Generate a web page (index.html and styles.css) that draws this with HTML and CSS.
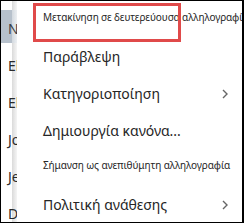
FILE: index.html
```html
<!DOCTYPE html>
<html lang="el">
<head>
    <meta charset="UTF-8">
    <title>Μενού αλληλογραφίας</title>
    <link rel="stylesheet" href="styles.css">
</head>
<body>
    <div class="frame">
        <div class="list">
            <div class="list-row selected">Nikos Papadopoulos</div>
            <div class="list-row">Eleni Georgiou</div>
            <div class="list-row">Elena Markou</div>
            <div class="list-row">John Smith</div>
            <div class="list-row">Jenny Adams</div>
            <div class="list-row">Dimitris Kostas</div>
        </div>
        <div class="menu">
            <div class="item small first">Μετακίνηση σε δευτερεύουσα αλληλογραφία</div>
            <div class="item">Παράβλεψη</div>
            <div class="item">Κατηγοριοποίηση
                <svg class="chevron" width="6" height="10" viewBox="0 0 6 10"><polyline points="1,1 5,5 1,9" fill="none" stroke="#666" stroke-width="1.4"/></svg>
            </div>
            <div class="item">Δημιουργία κανόνα...</div>
            <div class="item small">Σήμανση ως ανεπιθύμητη αλληλογραφία</div>
            <div class="item">Πολιτική ανάθεσης
                <svg class="chevron" width="6" height="10" viewBox="0 0 6 10"><polyline points="1,1 5,5 1,9" fill="none" stroke="#666" stroke-width="1.4"/></svg>
            </div>
            <!-- highlight around the first command -->
            <div class="callout"></div>
        </div>
    </div>
</body>
</html>
```

FILE: styles.css
```css
body {
    margin: 0;
    padding: 0;
    background: #fff;
    font-family: "Noto Sans", "DejaVu Sans", sans-serif;
}

.frame {
    width: 244px;
    height: 223px;
    box-sizing: border-box;
    border: 1px solid #000;
    border-right-width: 2px;
    display: flex;
    overflow: hidden;
}

.list {
    flex: none;
    width: 16px;
    padding-top: 9px;
    overflow: hidden;
    background: linear-gradient(to right, #fff 11px, #dadada 11px, #f5f5f5 16px);
}

.list-row {
    height: 37px;
    padding-left: 7px;
    display: flex;
    align-items: center;
    white-space: nowrap;
    font-size: 14px;
    color: #2a2a2a;
}

.list-row.selected {
    background: linear-gradient(to right, #b7c1cc 11px, #d3d9df 11px, #eceff2 16px) top left / 100% 33px no-repeat;
    color: #3a3f45;
}

.menu {
    flex: 1;
    min-width: 0;
    position: relative;
    background: #fff;
}

.item {
    height: 37px;
    box-sizing: border-box;
    padding: 0 14px 0 26px;
    display: flex;
    align-items: center;
    justify-content: space-between;
    white-space: nowrap;
    font-size: 14px;
    color: #262626;
}

.item.small {
    font-size: 10px;
    letter-spacing: -0.1px;
    padding-bottom: 5px;
}

.item.first {
    padding-bottom: 6px;
}

.chevron {
    flex-shrink: 0;
}

.callout {
    position: absolute;
    left: 16px;
    top: 2px;
    width: 148px;
    height: 39px;
    box-sizing: border-box;
    border: 3px solid #e04a4a;
}
```
